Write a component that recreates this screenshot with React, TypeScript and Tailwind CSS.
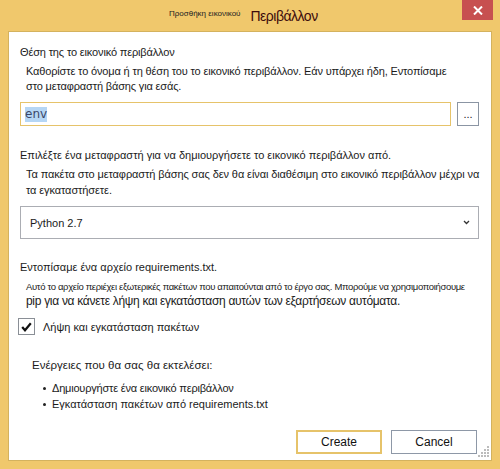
import React from "react";

function Grip() {
  const dots: [number, number][] = [];
  for (let r = 0; r < 4; r++) {
    for (let c = 3 - r; c < 4; c++) {
      dots.push([c * 3, r * 3]);
    }
  }
  return (
    <svg width="12" height="12" viewBox="0 0 12 12" className="absolute right-[1px] bottom-[2px]">
      {dots.map(([x, y], i) => (
        <rect key={i} x={x} y={y} width="2" height="2" fill="#bcbcbc" />
      ))}
    </svg>
  );
}

export default function App() {
  return (
    <div className="w-[500px] h-[469px] bg-[#f0c86c] flex flex-col font-['Liberation_Sans',Arial,sans-serif] text-[#1b1b1b] whitespace-nowrap overflow-hidden">
      <div className="h-[31px] flex items-start shrink-0">
        <div className="ml-[169px] flex items-start gap-[10px]">
          <span className="mt-[9px] text-[8px] leading-[10px] text-[#222]">Προσθήκη εικονικού</span>
          <span className="mt-[7px] text-[14px] leading-[18px] tracking-[-0.5px] text-[#3d0c0c]">Περιβάλλον</span>
        </div>
        <div className="ml-auto mr-[7px] w-[31px] h-[20px] bg-[#c75050] flex items-center justify-center">
          <svg width="10" height="9" viewBox="0 0 10 9">
            <path d="M1 0.5 L9 8.5 M9 0.5 L1 8.5" stroke="#fff" strokeWidth="2" />
          </svg>
        </div>
      </div>
      <div className="relative mx-[8px] mb-[8px] flex-1 bg-white border border-[#d4b25e] flex flex-col pl-[11px] pr-[12px]">
        <div className="mt-[12px] text-[11px] leading-[16px] tracking-[-0.15px]">Θέση της το εικονικό περιβάλλον</div>
        <div className="ml-[6px] mt-[4px] text-[11px] leading-[15px] tracking-[-0.15px]">
          Καθορίστε το όνομα ή τη θέση του το εικονικό περιβάλλον. Εάν υπάρχει ήδη, Εντοπίσαμε
          <br />
          στο μεταφραστή βάσης για εσάς.
        </div>
        <div className="mt-[8px] flex h-[24px]">
          <div className="w-[431px] h-[24px] border border-[#e6c36a] flex items-center pl-[4px]">
            <span className="bg-[#b5d6f5] text-[#3a4668] font-['DejaVu_Sans',sans-serif] text-[12px] leading-[15px]">env</span>
          </div>
          <div className="ml-[6px] w-[22px] h-[24px] border border-[#8b95a3] flex items-center justify-center text-[11px] leading-none text-[#222]">
            ...
          </div>
        </div>
        <div className="mt-[21px] text-[11px] leading-[16px]">
          Επιλέξτε ένα μεταφραστή για να δημιουργήσετε το εικονικό περιβάλλον από.
        </div>
        <div className="ml-[6px] mt-[3px] text-[11px] leading-[16px] tracking-[-0.1px]">
          Τα πακέτα στο μεταφραστή βάσης σας δεν θα είναι διαθέσιμη στο εικονικό περιβάλλον μέχρι να
          <br />
          τα εγκαταστήσετε.
        </div>
        <div className="mt-[8px] h-[33px] border border-[#abadb3] flex items-center pl-[9px] pr-[8px]">
          <span className="text-[11px] leading-[16px]">Python 2.7</span>
          <svg className="ml-auto" width="7" height="5" viewBox="0 0 7 5">
            <path d="M1 1 L3.5 3.5 L6 1" stroke="#333" strokeWidth="1.3" fill="none" />
          </svg>
        </div>
        <div className="mt-[20px] text-[11px] leading-[16px]">Εντοπίσαμε ένα αρχείο requirements.txt.</div>
        <div className="ml-[6px] mt-[6px] text-[9.5px] leading-[12px] tracking-[-0.35px]">
          Αυτό το αρχείο περιέχει εξωτερικές πακέτων που απαιτούνται από το έργο σας. Μπορούμε να χρησιμοποιήσουμε
        </div>
        <div className="ml-[6px] mt-[1px] text-[12px] leading-[14px] tracking-[-0.3px]">
          pip για να κάνετε λήψη και εγκατάσταση αυτών των εξαρτήσεων αυτόματα.
        </div>
        <div className="mt-[10px] flex items-center">
          <div className="ml-[-2px] w-[17px] h-[17px] border border-[#8a8f96] flex items-center justify-center">
            <svg width="11" height="10" viewBox="0 0 11 10">
              <path d="M1.2 5 L4 8.3 L9.8 1.2" stroke="#111" strokeWidth="2.2" fill="none" />
            </svg>
          </div>
          <span className="ml-[8px] text-[11px] leading-[16px]">Λήψη και εγκατάσταση πακέτων</span>
        </div>
        <div className="ml-[12px] mt-[22px] text-[11.5px] leading-[16px]">Ενέργειες που θα σας θα εκτελέσει:</div>
        <div className="ml-[23px] mt-[7px] flex flex-col text-[11px] leading-[16px]">
          <div className="flex items-center">
            <span className="w-[3px] h-[3px] bg-[#222] rounded-full" />
            <span className="ml-[6px] tracking-[-0.2px]">Δημιουργήστε ένα εικονικό περιβάλλον</span>
          </div>
          <div className="flex items-center">
            <span className="w-[3px] h-[3px] bg-[#222] rounded-full" />
            <span className="ml-[6px]">Εγκατάσταση πακέτων από requirements.txt</span>
          </div>
        </div>
        <div className="mt-[18px] mr-[2px] flex justify-end gap-[9px]">
          <div className="w-[86px] h-[24px] border-2 border-[#e6c36a] flex items-center justify-center text-[12px] leading-none text-[#111]">
            Create
          </div>
          <div className="w-[86px] h-[24px] border border-[#8e98a7] flex items-center justify-center text-[12px] leading-none text-[#111]">
            Cancel
          </div>
        </div>
        <Grip />
      </div>
    </div>
  );
}
